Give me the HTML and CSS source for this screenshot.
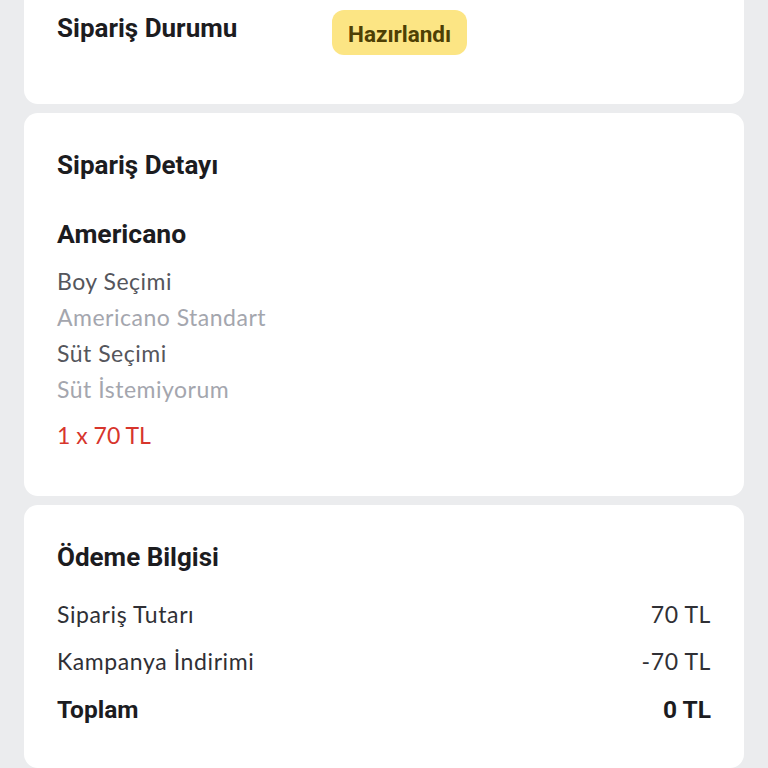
FILE: index.html
```html
<!DOCTYPE html>
<html lang="tr">
<head>
<meta charset="utf-8">
<link rel="stylesheet" href="styles.css">
</head>
<body>
<div class="page">
  <section class="card card-status">
    <div class="status-row">
      <h2 class="title">Sipariş Durumu</h2>
      <span class="badge">Hazırlandı</span>
    </div>
  </section>

  <section class="card card-detail">
    <h2 class="title">Sipariş Detayı</h2>
    <h3 class="product">Americano</h3>
    <ul class="options">
      <li class="opt-label">Boy Seçimi</li>
      <li class="opt-value">Americano Standart</li>
      <li class="opt-label">Süt Seçimi</li>
      <li class="opt-value">Süt İstemiyorum</li>
    </ul>
    <div class="price">1 x 70 TL</div>
  </section>

  <section class="card card-pay">
    <h2 class="title">Ödeme Bilgisi</h2>
    <div class="pay-rows">
      <div class="pay-row"><span>Sipariş Tutarı</span><span>70 TL</span></div>
      <div class="pay-row"><span>Kampanya İndirimi</span><span>-70 TL</span></div>
      <div class="pay-row total"><span>Toplam</span><span>0 TL</span></div>
    </div>
  </section>
</div>
</body>
</html>
```

FILE: styles.css
```css
* { box-sizing: border-box; }
html, body { margin: 0; padding: 0; }
body {
  background: #ebecee;
  font-family: Lato, "Open Sans", sans-serif;
  color: #2b2b30;
}
.page {
  width: 768px;
  height: 768px;
  overflow: hidden;
  padding: 0 24px;
  display: flex;
  flex-direction: column;
  gap: 9px;
}
.card {
  background: #ffffff;
  border-radius: 14px;
  padding: 0 33px;
}
.card-status {
  border-top-left-radius: 0;
  border-top-right-radius: 0;
  height: 104px;
  padding-top: 10px;
}
.title {
  margin: 0;
  font-family: Roboto, sans-serif;
  font-weight: 700;
  font-size: 26px;
  line-height: 28px;
  color: #1c1c1f;
}
.status-row {
  display: grid;
  grid-template-columns: 275px auto;
  align-items: start;
  justify-content: start;
}
.status-row .title { margin-top: 4px; }
.badge {
  justify-self: start;
  height: 45px;
  padding: 2px 16px 0;
  border-radius: 12px;
  background: #fce584;
  color: #4e3f04;
  font-family: Roboto, sans-serif;
  font-weight: 700;
  font-size: 22.5px;
  display: flex;
  align-items: center;
}
.card-detail {
  padding-top: 38px;
  padding-bottom: 43px;
}
.product {
  margin: 41px 0 0;
  font-family: Roboto, sans-serif;
  font-weight: 700;
  font-size: 26.5px;
  line-height: 28px;
  color: #1c1c1f;
}
.options {
  list-style: none;
  margin: 15px 0 0;
  padding: 0;
}
.options li {
  font-size: 23px;
  line-height: 36px;
  letter-spacing: 0.5px;
}
.opt-label { color: #55565c; }
.opt-value { color: #a4a6ae; }
.price {
  margin-top: 10px;
  font-size: 23px;
  line-height: 36px;
  color: #d7352c;
}
.card-pay {
  padding-top: 38px;
  padding-bottom: 37px;
  flex: 1;
}
.pay-rows {
  margin-top: 25px;
  display: flex;
  flex-direction: column;
  gap: 11px;
}
.pay-row {
  display: flex;
  justify-content: space-between;
  font-size: 23px;
  line-height: 36px;
  letter-spacing: 0.6px;
  color: #303035;
}
.pay-row.total {
  margin-top: 2px;
  font-family: Roboto, sans-serif;
  font-weight: 700;
  font-size: 24.5px;
  letter-spacing: 0;
  color: #1c1c1f;
}
```
